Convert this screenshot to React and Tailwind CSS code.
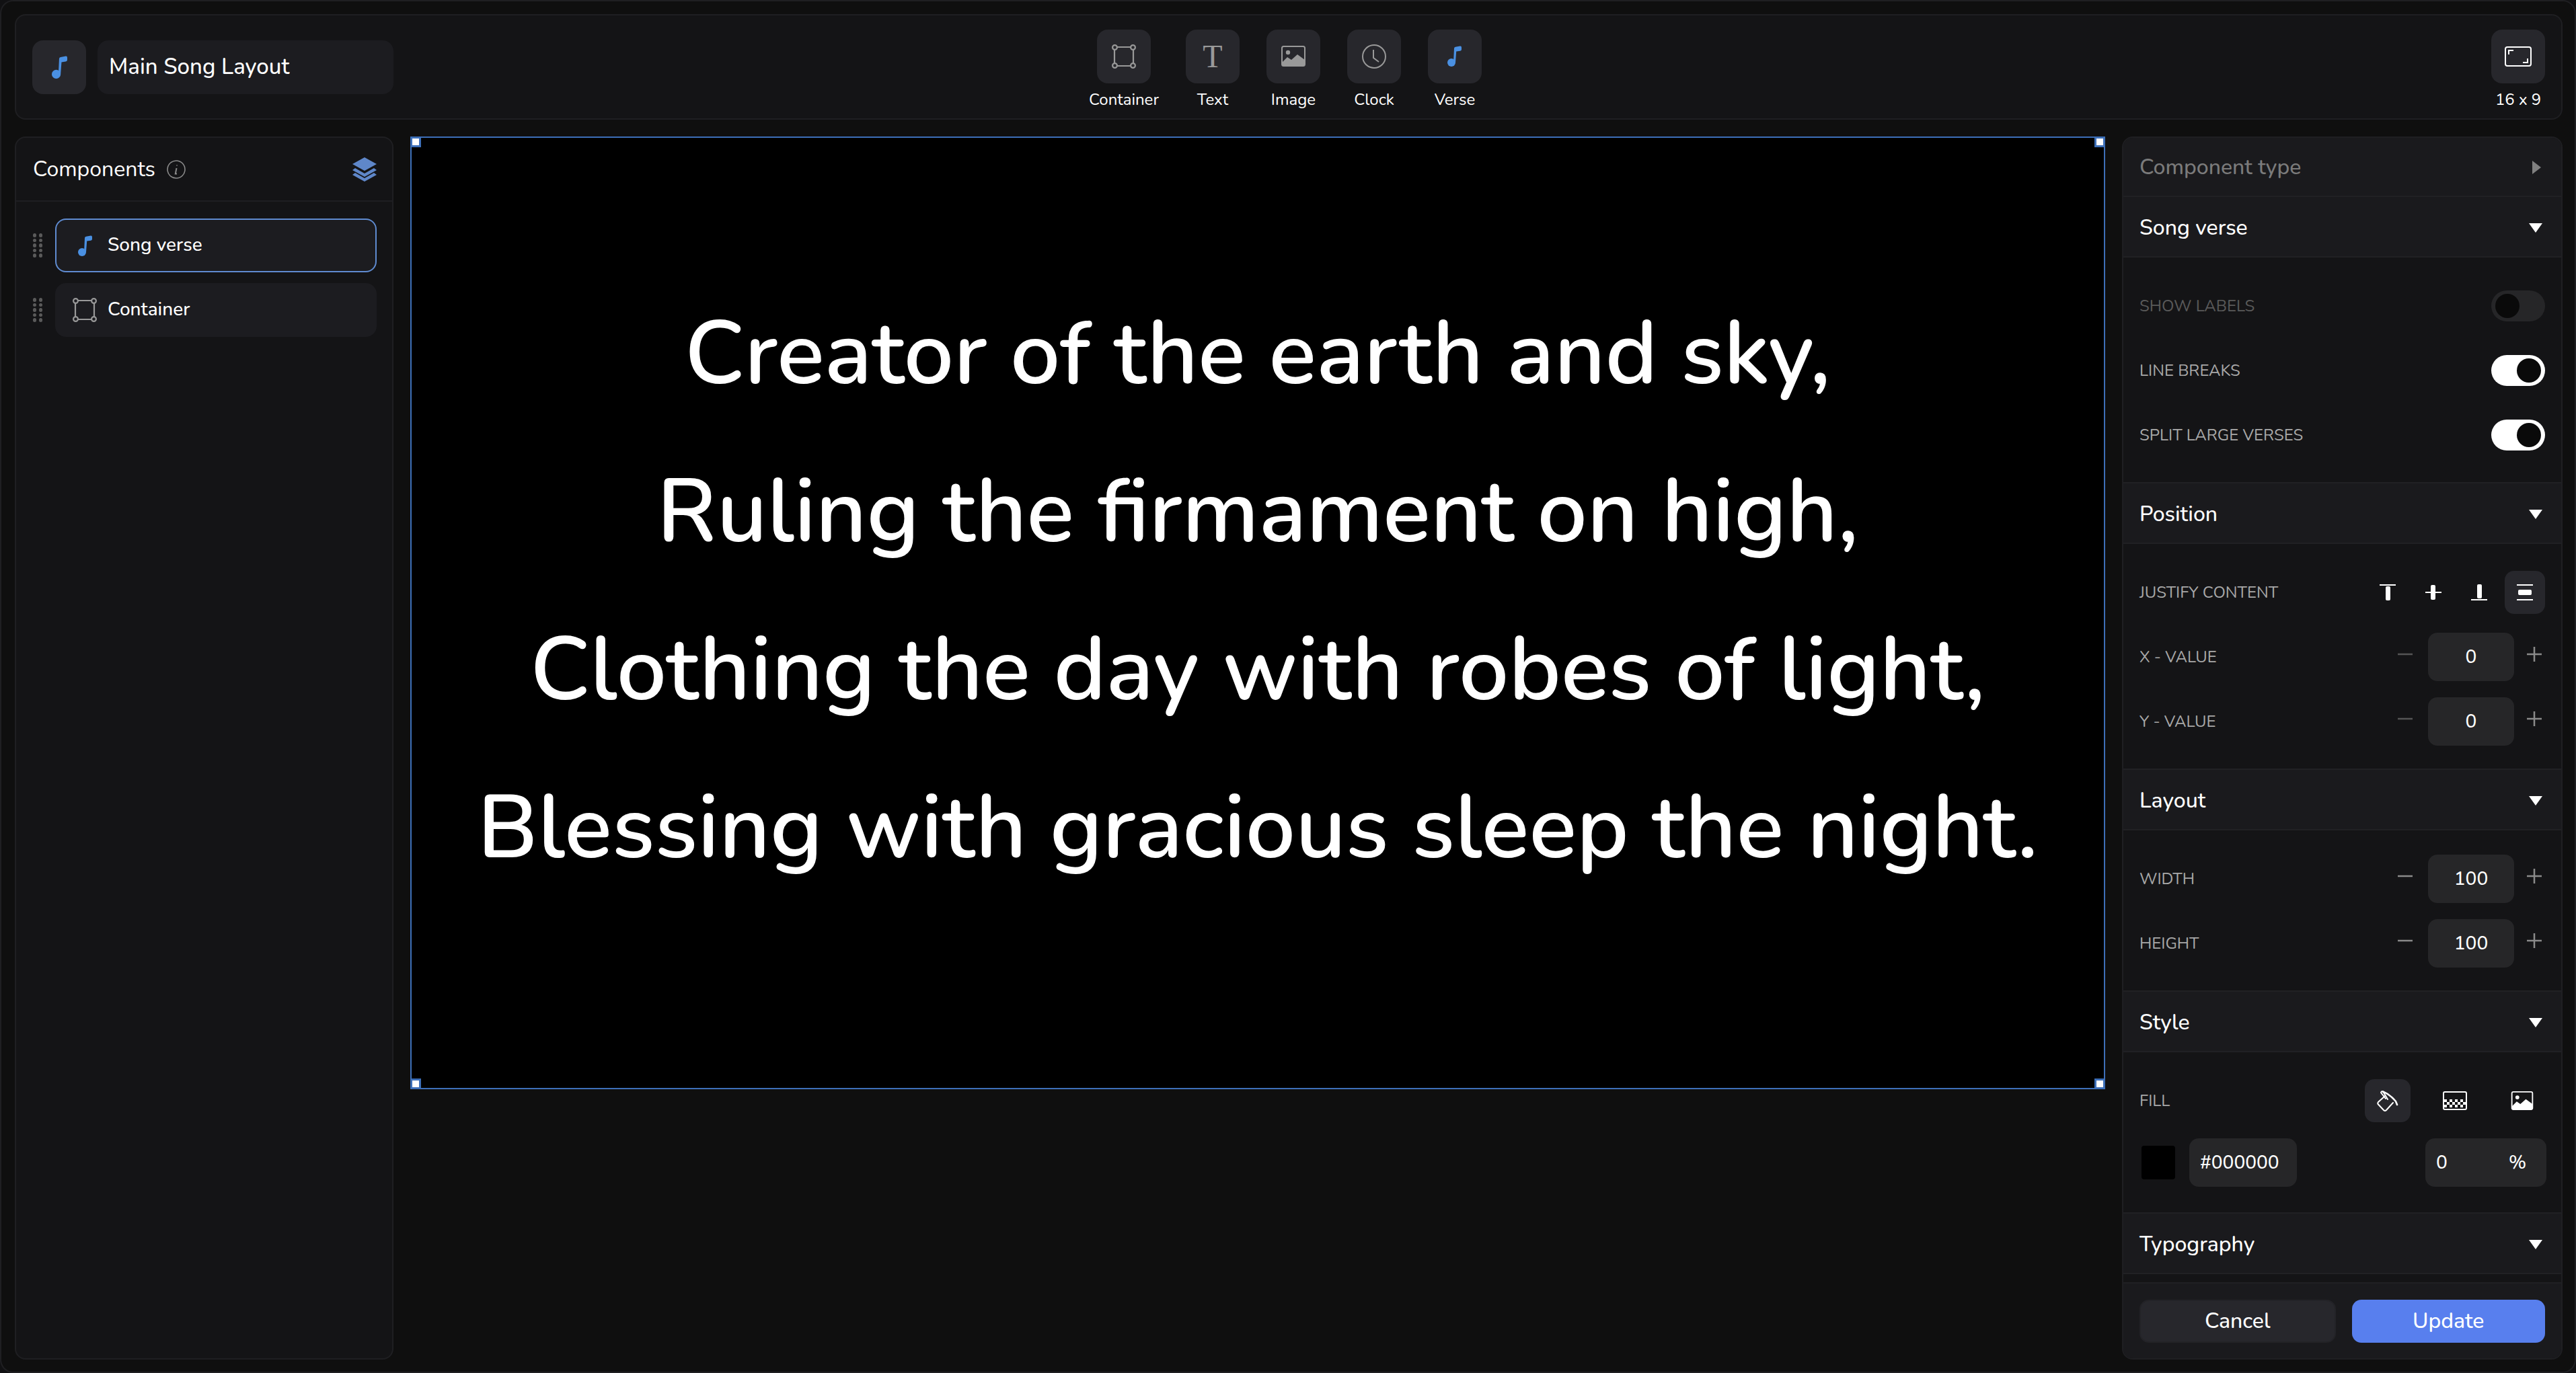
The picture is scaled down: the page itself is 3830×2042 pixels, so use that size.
import React from 'react';

const font = "font-['Nunito','Lato','Noto_Sans',sans-serif]";

function MusicNote({ className }) {
  return (
    <svg viewBox="0 0 21 31" className={className} fill="#4a90e2">
      <circle cx="6" cy="25" r="6" />
      <path d="M9 25 L10 4 Q10 2 12 1.8 L19 0.5 Q21 0.3 21 2.5 L21 5.5 Q21 7.5 19 7.8 L13.2 8.6 L12 25 Z" />
    </svg>
  );
}

function ContainerIcon({ className }) {
  return (
    <svg viewBox="0 0 36 36" className={className} fill="none" stroke="#999" strokeWidth="2.2">
      <path d="M8 4 H28 M8 32 H28 M4 8 V28 M32 8 V28" />
      <circle cx="4.5" cy="4.5" r="3.4" />
      <circle cx="31.5" cy="4.5" r="3.4" />
      <circle cx="4.5" cy="31.5" r="3.4" />
      <circle cx="31.5" cy="31.5" r="3.4" />
    </svg>
  );
}

function ImageIcon({ className, color = '#999' }) {
  return (
    <svg viewBox="0 0 36 31" className={className} fill="none">
      <rect x="1" y="1" width="34" height="29" rx="2.5" stroke={color} strokeWidth="2" />
      <circle cx="10" cy="10" r="3.2" fill={color} />
      <path d="M1 25 L9 17 L15 21 L24 13 L35 21 V28 Q35 30 33 30 H3 Q1 30 1 28 Z" fill={color} />
    </svg>
  );
}

function Triangle({ open = true }) {
  if (!open) {
    return <div className="w-0 h-0 border-y-[10px] border-y-transparent border-l-[13px] border-l-[#808080] mr-[2px]" />;
  }
  return <div className="w-0 h-0 border-x-[10.5px] border-x-transparent border-t-[14px] border-t-white" />;
}

function SectionHeader({ title, dim, open = true, first }) {
  return (
    <div className={`${first ? 'h-[88px] pt-[2px]' : 'h-[90px] pt-[4px]'} shrink-0 flex items-center justify-between pl-[24px] pr-[28px] bg-[#1a1a1d] border-b-2 border-[#212124]`}>
      <span className={`text-[32px] font-medium ${dim ? 'text-[#7b7b7b]' : 'text-white'}`}>{title}</span>
      <Triangle open={open} />
    </div>
  );
}

function Toggle({ on }) {
  return (
    <div className={`w-[80px] h-[46px] rounded-full flex items-center px-[6px] ${on ? 'bg-white justify-end' : 'bg-[#262628] justify-start'}`}>
      <div className="w-[36px] h-[36px] rounded-full bg-[#0a0a0a]" />
    </div>
  );
}

function Label({ children, dim }) {
  return <span className={`text-[24px] uppercase ${dim ? 'text-[#5a5a5a]' : 'text-[#a8a8a8]'}`}>{children}</span>;
}

function ToggleRow({ label, on, disabled }) {
  return (
    <div className="h-[96px] flex items-center justify-between">
      <Label dim={disabled}>{label}</Label>
      <Toggle on={on} />
    </div>
  );
}

function Stepper({ label, value, minusDim }) {
  return (
    <div className="h-[96px] flex items-center justify-between">
      <Label>{label}</Label>
      <div className="flex items-center">
        <svg viewBox="0 0 22 22" className="w-[22px] h-[22px] mr-[23px] -translate-y-[4px]" stroke={minusDim ? '#555' : '#8a8a8a'} strokeWidth="2.5">
          <path d="M0 11 H22" />
        </svg>
        <div className="w-[128px] h-[72px] rounded-[14px] bg-[#262628] flex items-center justify-center text-white text-[28px] font-medium">{value}</div>
        <svg viewBox="0 0 22 22" className="w-[22px] h-[22px] ml-[19px] mr-[5px] -translate-y-[4px]" stroke="#8a8a8a" strokeWidth="2.5">
          <path d="M0 11 H22 M11 0 V22" />
        </svg>
      </div>
    </div>
  );
}

function JustifyIcon({ kind }) {
  return (
    <svg viewBox="0 0 24 24" className="w-[24px] h-[24px]" fill="white" stroke="none">
      {kind === 'start' && <><rect x="0" y="0" width="24" height="2" /><rect x="9" y="3" width="7" height="21" rx="2" /></>}
      {kind === 'center' && <><rect x="0" y="11" width="24" height="2" /><rect x="8" y="1" width="7" height="22" rx="2" /></>}
      {kind === 'end' && <><rect x="0" y="22" width="24" height="2" /><rect x="9" y="0" width="7" height="21" rx="2" /></>}
      {kind === 'between' && <><rect x="0" y="0" width="24" height="2" /><rect x="0" y="22" width="24" height="2" /><rect x="2" y="8" width="20" height="8" rx="2" /></>}
    </svg>
  );
}

function Handle({ className }) {
  return (
    <div className={`absolute w-[16px] h-[16px] bg-white border-[3px] border-[#3d6fb8] ${className}`} />
  );
}

function DragDots() {
  return (
    <div className="grid grid-cols-2 gap-x-[3px] gap-y-[2px] w-[14px]">
      {Array.from({ length: 10 }).map((_, i) => (
        <div key={i} className="w-[5px] h-[5.5px] rounded-full bg-[#5a5a5a]" />
      ))}
    </div>
  );
}

function ToolButton({ label, children }) {
  return (
    <div className="flex flex-col items-center min-w-[80px]">
      <div className="w-[80px] h-[80px] rounded-[16px] bg-[#27272c] flex items-center justify-center">{children}</div>
      <span className="text-[24px] leading-none mt-[12px] text-white">{label}</span>
    </div>
  );
}

function ComponentRow({ active, icon, label }) {
  return (
    <div className="flex items-center">
      <div className="w-[58px] pl-[25px] shrink-0"><DragDots /></div>
      <div className={`flex-1 h-[80px] rounded-[16px] bg-[#1c1c20] flex items-center relative border-2 ${active ? 'border-[#5f8bd0]' : 'border-transparent'}`}>
        <div className="w-[76px] pl-[8px] flex justify-center shrink-0">{icon}</div>
        <span className="text-[28px] font-medium text-white pb-[2px]">{label}</span>
      </div>
    </div>
  );
}

// checker squares for the transparency fill icon
const checker = [];
for (let row = 0; row < 3; row++) {
  for (let col = 0; col < 8; col++) {
    if ((row + col) % 2 === 0) checker.push([2 + col * 4, 12 + row * 4]);
  }
}

export default function App() {
  return (
    <div className={`w-[3830px] h-[2042px] overflow-hidden bg-[#111113] ${font}`}>
      <div className="w-full h-full rounded-[20px] border-2 border-[#1f1f22] bg-[#0f0f0f] pl-[20px] pr-[18px] pt-[19px] pb-[18px] flex flex-col gap-[25px]">
        {/* Top bar */}
        <header className="h-[157px] shrink-0 rounded-[16px] border-2 border-[#1f1f22] bg-[#141416] flex items-center justify-between pl-[24px] pr-[24px]">
          <div className="w-[528px] flex items-center gap-[17px]">
            <div className="w-[80px] h-[80px] rounded-[16px] bg-[#27272c] flex items-center justify-center shrink-0">
              <MusicNote className="w-[23px] h-[34px]" />
            </div>
            <div className="w-[440px] h-[80px] shrink-0 rounded-[16px] bg-[#1c1c20] flex items-center pl-[17px] text-[33px] font-medium text-white">Main Song Layout</div>
          </div>
          <div className="flex items-start gap-[40px] pt-[4px]">
            <ToolButton label="Container"><ContainerIcon className="w-[36px] h-[36px]" /></ToolButton>
            <ToolButton label="Text"><span className="font-['Liberation_Serif',serif] text-[48px] leading-none text-[#999]">T</span></ToolButton>
            <ToolButton label="Image"><ImageIcon className="w-[36px] h-[31px]" /></ToolButton>
            <ToolButton label="Clock">
              <svg viewBox="0 0 36 36" className="w-[36px] h-[36px]" fill="none" stroke="#999" strokeWidth="2">
                <circle cx="18" cy="18" r="17" />
                <path d="M17 8 V20 L25 26" />
              </svg>
            </ToolButton>
            <ToolButton label="Verse"><MusicNote className="w-[21px] h-[31px]" /></ToolButton>
          </div>
          <div className="w-[538px] flex justify-end pt-[4px]">
            <ToolButton label="16 x 9">
              <svg viewBox="0 0 40 30" className="w-[40px] h-[30px]" fill="none" stroke="white" strokeWidth="2">
                <rect x="1" y="1" width="38" height="28" rx="3" />
                <path d="M6 12 V6 H13 M34 18 V24 H27" />
              </svg>
            </ToolButton>
          </div>
        </header>

        <div className="flex-1 min-h-0 flex gap-[25px]">
          {/* Left panel */}
          <aside className="w-[563px] shrink-0 rounded-[16px] border-2 border-[#1f1f22] bg-[#141416] flex flex-col">
            <div className="h-[95px] shrink-0 border-b-2 border-[#1f1f22] flex items-center justify-between pl-[25px] pr-[23px]">
              <div className="flex items-center gap-[17px]">
                <span className="text-[32px] text-white">Components</span>
                <svg viewBox="0 0 28 28" className="w-[28px] h-[28px]" fill="none" stroke="#8a8a8a" strokeWidth="1.6">
                  <circle cx="14" cy="14" r="13" />
                  <path d="M15 7.5 V8.5 M14.5 12 L12.8 20.5 H15" strokeWidth="2" />
                </svg>
              </div>
              <svg viewBox="0 0 36 36" className="w-[36px] h-[36px]" fill="#5f87c9">
                <path d="M18 0 L36 10 L18 20 L0 10 Z" />
                <path d="M4 16 L18 24 L32 16 L36 19 L18 29 L0 19 Z" />
                <path d="M4 23 L18 31 L32 23 L36 26 L18 36 L0 26 Z" />
              </svg>
            </div>
            <div className="flex flex-col gap-[16px] pt-[25px] pr-[23px]">
              <ComponentRow active label="Song verse" icon={<MusicNote className="w-[21px] h-[31px]" />} />
              <ComponentRow label="Container" icon={<ContainerIcon className="w-[36px] h-[36px]" />} />
            </div>
          </aside>

          {/* Canvas */}
          <main className="w-[2520px] shrink-0">
            <div className="relative w-[2520px] h-[1417px] bg-black border-2 border-[#3d6fb8] flex flex-col items-center justify-center text-white text-[131.6px] font-semibold leading-[235px] pb-[66px]">
              <Handle className="top-[-2px] left-[-2px]" />
              <Handle className="top-[-2px] right-[-2px]" />
              <Handle className="bottom-[-2px] left-[-2px]" />
              <Handle className="bottom-[-2px] right-[-2px]" />
              <p>Creator of the earth and sky,</p>
              <p>Ruling the firmament on high,</p>
              <p>Clothing the day with robes of light,</p>
              <p>Blessing with gracious sleep the night.</p>
            </div>
          </main>

          {/* Right panel */}
          <aside className="flex-1 min-w-0 rounded-[16px] border-2 border-[#1f1f22] bg-[#141416] flex flex-col overflow-hidden">
            <SectionHeader title="Component type" dim open={false} first />
            <SectionHeader title="Song verse" />
            <div className="h-[336px] shrink-0 flex flex-col justify-center pt-[2px] pl-[24px] pr-[24px] border-b-2 border-[#212124]">
              <ToggleRow label="Show labels" disabled />
              <ToggleRow label="Line breaks" on />
              <ToggleRow label="Split large verses" on />
            </div>
            <SectionHeader title="Position" />
            <div className="h-[336px] shrink-0 flex flex-col justify-center pt-[2px] pl-[24px] pr-[24px] border-b-2 border-[#212124]">
              <div className="h-[96px] flex items-center justify-between">
                <Label>Justify content</Label>
                <div className="flex items-center gap-[8px]">
                  {['start', 'center', 'end', 'between'].map((k) => (
                    <div key={k} className={`w-[60px] h-[64px] rounded-[14px] flex items-center justify-center ${k === 'between' ? 'bg-[#27272c]' : ''}`}>
                      <JustifyIcon kind={k} />
                    </div>
                  ))}
                </div>
              </div>
              <Stepper label="X - value" value="0" minusDim />
              <Stepper label="Y - value" value="0" minusDim />
            </div>
            <SectionHeader title="Layout" />
            <div className="h-[240px] shrink-0 flex flex-col justify-center pt-[2px] pl-[24px] pr-[24px] border-b-2 border-[#212124]">
              <Stepper label="Width" value="100" />
              <Stepper label="Height" value="100" />
            </div>
            <SectionHeader title="Style" />
            <div className="h-[240px] shrink-0 flex flex-col pl-[24px] pr-[24px] border-b-2 border-[#212124]">
              <div className="h-[64px] mt-[40px] flex items-center justify-between">
                <Label>Fill</Label>
                <div className="flex items-center gap-[32px]">
                  <div className="w-[68px] h-[64px] rounded-[14px] bg-[#27272c] flex items-center justify-center">
                    <svg viewBox="0 0 32 31" className="w-[32px] h-[31px]" fill="none" stroke="white" strokeWidth="2" strokeLinejoin="round" strokeLinecap="round">
                      <path d="M12 8 L2 17 Q0.5 19 2 20.5 L10 29 Q12 31 14 29 L24 18" />
                      <path d="M6 3 Q7 0 9.5 2 L16 13 M6 3 L13 12" />
                      <path d="M9 1.5 Q20 6 28 16 L30 21" strokeWidth="2.6" />
                    </svg>
                  </div>
                  <div className="w-[68px] flex justify-center">
                    <svg viewBox="0 0 36 28" className="w-[36px] h-[28px]" fill="none">
                      <rect x="1" y="1" width="34" height="26" rx="2" stroke="white" strokeWidth="2" />
                      {checker.map(([x, y]) => (
                        <rect key={`${x}-${y}`} x={x} y={y} width="4" height="4" fill="white" />
                      ))}
                    </svg>
                  </div>
                  <div className="w-[68px] flex justify-center">
                    <ImageIcon className="w-[36px] h-[28px]" color="white" />
                  </div>
                </div>
              </div>
              <div className="flex items-center justify-between mt-[24px]">
                <div className="flex items-center gap-[21px] pl-[3px]">
                  <div className="w-[50px] h-[50px] rounded-[4px] bg-black" />
                  <div className="w-[160px] h-[72px] rounded-[14px] bg-[#262628] flex items-center pl-[16px] text-[28px] font-medium text-white">#000000</div>
                </div>
                <div className="w-[180px] h-[72px] -mr-[2px] rounded-[14px] bg-[#262628] flex items-center justify-between pl-[16px] pr-[30px] text-[28px] font-medium text-white">
                  <span>0</span>
                  <span>%</span>
                </div>
              </div>
            </div>
            <SectionHeader title="Typography" />
            <div className="h-[12px] shrink-0" />
            <div className="flex-1 border-t-2 border-[#212124] bg-[#1a1a1d] flex items-start gap-[24px] pl-[24px] pr-[24px] pt-[24px]">
              <button className="flex-1 h-[64px] rounded-[14px] bg-[#27272c] border-2 border-[#232327] text-white text-[32px] font-medium">Cancel</button>
              <button className="flex-1 h-[64px] rounded-[14px] bg-[#587fee] text-white text-[32px] font-medium">Update</button>
            </div>
          </aside>
        </div>
      </div>
    </div>
  );
}
